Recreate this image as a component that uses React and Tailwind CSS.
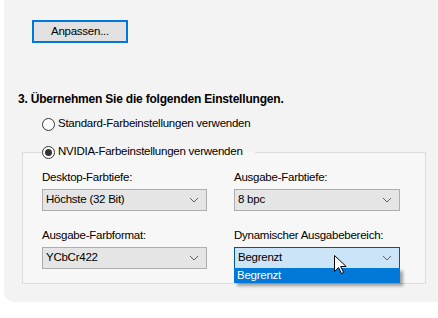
import React from "react";

function Chevron() {
  return (
    <svg width="10" height="6" viewBox="0 0 10 6" className="shrink-0">
      <path d="M1 1l4 4 4-4" stroke="#606060" strokeWidth="1" fill="none" />
    </svg>
  );
}

function Select({ value, open }) {
  return (
    <div
      className={`relative h-[22px] flex items-center justify-between pl-[3px] pr-[7px] border ${
        open ? "border-[#005499] bg-[#cce4f7]" : "border-[#adadad] bg-[#e5e5e5]"
      }`}
    >
      <span>{value}</span>
      <Chevron />
      {open && (
        <>
          <div className="absolute left-[-1px] right-[-1px] top-full h-[15px] bg-[#0078d7] text-white pl-[3px] leading-[15px] shadow-[3px_3px_3px_rgba(0,0,0,0.35)]">
            {value}
          </div>
          <svg
            width="13"
            height="19"
            viewBox="0 0 13 19"
            className="absolute left-[99px] top-[7px] pointer-events-none"
          >
            <path
              d="M0.5 0.5v16l4-4 3 6 2.2-1-3-6h5.5z"
              fill="#fff"
              stroke="#000"
              strokeWidth="1"
              strokeLinejoin="miter"
            />
          </svg>
        </>
      )}
    </div>
  );
}

function Radio({ checked }) {
  return (
    <span className="w-[13px] h-[13px] rounded-full border border-[#333] bg-white flex items-center justify-center shrink-0">
      {checked && <span className="w-[7px] h-[7px] rounded-full bg-[#333]" />}
    </span>
  );
}

function Field({ label, value, open }) {
  return (
    <div className="flex flex-col">
      <div className="leading-[16px] mb-[4px]">{label}</div>
      <Select value={value} open={open} />
    </div>
  );
}

export default function App() {
  return (
    <div className="w-[438px] h-[318px] bg-white font-['Liberation_Sans',Arial,sans-serif] text-[11.5px] tracking-[-0.25px] text-black">
      <div className="ml-[4px] h-[302px] bg-[#f3f3f3] rounded-bl-[10px] pt-[20px] flex flex-col items-start">
        <button
          type="button"
          className="ml-[28px] w-[96px] h-[23px] border-2 border-[#0078d7] bg-[#e1e1e1] text-[11.5px] leading-none"
        >
          Anpassen...
        </button>

        <h3 className="mt-[48px] ml-[14px] font-bold text-[12px] leading-[16px] tracking-[-0.2px]">
          3. Übernehmen Sie die folgenden Einstellungen.
        </h3>

        <label className="mt-[9px] ml-[38px] h-[16px] flex items-center gap-[3px]">
          <Radio />
          <span>Standard-Farbeinstellungen verwenden</span>
        </label>

        <fieldset className="mt-[12px] ml-[18px] w-[404px] border border-[#dcdcdc] bg-[#f7f7f7] pl-[19px] pb-[14px]">
          <legend className="pr-[12px] h-[16px] flex items-center gap-[3px]">
            <Radio checked />
            <span>NVIDIA-Farbeinstellungen verwenden</span>
          </legend>
          <div className="grid grid-cols-[165px_166px] gap-x-[27px] gap-y-[16px] mt-[9px]">
            <Field label="Desktop-Farbtiefe:" value="Höchste (32 Bit)" />
            <Field label="Ausgabe-Farbtiefe:" value="8 bpc" />
            <Field label="Ausgabe-Farbformat:" value="YCbCr422" />
            <Field label="Dynamischer Ausgabebereich:" value="Begrenzt" open />
          </div>
        </fieldset>
      </div>
    </div>
  );
}
